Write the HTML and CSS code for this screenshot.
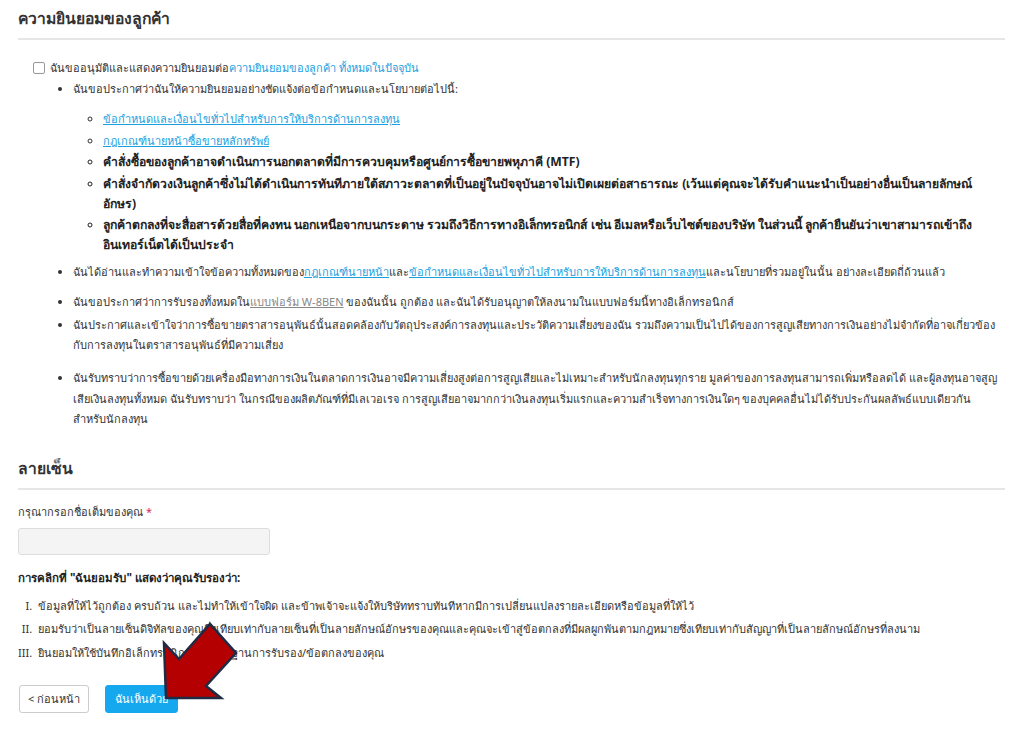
FILE: index.html
```html
<!DOCTYPE html>
<html lang="th">
<head>
<meta charset="utf-8">
<link rel="stylesheet" href="styles.css">
</head>
<body>
<div class="page">
  <h2 class="section-title">ความยินยอมของลูกค้า</h2>
  <div class="consent">
    <label class="check-row"><span class="checkbox"></span><span>ฉันขออนุมัติและแสดงความยินยอมต่อ<a class="link-plain">ความยินยอมของลูกค้า ทั้งหมดในปัจจุบัน</a></span></label>
    <ul class="main-list">
      <li class="item-first">ฉันขอประกาศว่าฉันให้ความยินยอมอย่างชัดแจ้งต่อข้อกำหนดและนโยบายต่อไปนี้:
        <ul class="sub-list">
          <li><a class="link">ข้อกำหนดและเงื่อนไขทั่วไปสำหรับการให้บริการด้านการลงทุน</a></li>
          <li><a class="link">กฎเกณฑ์นายหน้าซื้อขายหลักทรัพย์</a></li>
          <li class="strong">คำสั่งซื้อของลูกค้าอาจดำเนินการนอกตลาดที่มีการควบคุมหรือศูนย์การซื้อขายพหุภาคี (MTF)</li>
          <li class="strong">คำสั่งจำกัดวงเงินลูกค้าซึ่งไม่ได้ดำเนินการทันทีภายใต้สภาวะตลาดที่เป็นอยู่ในปัจจุบันอาจไม่เปิดเผยต่อสาธารณะ (เว้นแต่คุณจะได้รับคำแนะนำเป็นอย่างอื่นเป็นลายลักษณ์อักษร)</li>
          <li class="strong">ลูกค้าตกลงที่จะสื่อสารด้วยสื่อที่คงทน นอกเหนือจากบนกระดาษ รวมถึงวิธีการทางอิเล็กทรอนิกส์ เช่น อีเมลหรือเว็บไซต์ของบริษัท ในส่วนนี้ ลูกค้ายืนยันว่าเขาสามารถเข้าถึงอินเทอร์เน็ตได้เป็นประจำ</li>
        </ul>
      </li>
      <li class="item-read">ฉันได้อ่านและทำความเข้าใจข้อความทั้งหมดของ<a class="link">กฎเกณฑ์นายหน้า</a>และ<a class="link">ข้อกำหนดและเงื่อนไขทั่วไปสำหรับการให้บริการด้านการลงทุน</a>และนโยบายที่รวมอยู่ในนั้น อย่างละเอียดถี่ถ้วนแล้ว</li>
      <li class="item-w8">ฉันขอประกาศว่าการรับรองทั้งหมดใน<a class="link-gray">แบบฟอร์ม W-8BEN</a> ของฉันนั้น ถูกต้อง และฉันได้รับอนุญาตให้ลงนามในแบบฟอร์มนี้ทางอิเล็กทรอนิกส์</li>
      <li class="item-deriv">ฉันประกาศและเข้าใจว่าการซื้อขายตราสารอนุพันธ์นั้นสอดคล้องกับวัตถุประสงค์การลงทุนและประวัติความเสี่ยงของฉัน รวมถึงความเป็นไปได้ของการสูญเสียทางการเงินอย่างไม่จำกัดที่อาจเกี่ยวข้องกับการลงทุนในตราสารอนุพันธ์ที่มีความเสี่ยง</li>
      <li class="item-risk">ฉันรับทราบว่าการซื้อขายด้วยเครื่องมือทางการเงินในตลาดการเงินอาจมีความเสี่ยงสูงต่อการสูญเสียและไม่เหมาะสำหรับนักลงทุนทุกราย มูลค่าของการลงทุนสามารถเพิ่มหรือลดได้ และผู้ลงทุนอาจสูญเสียเงินลงทุนทั้งหมด ฉันรับทราบว่า ในกรณีของผลิตภัณฑ์ที่มีเลเวอเรจ การสูญเสียอาจมากกว่าเงินลงทุนเริ่มแรกและความสำเร็จทางการเงินใดๆ ของบุคคลอื่นไม่ได้รับประกันผลลัพธ์แบบเดียวกัน<br>สำหรับนักลงทุน</li>
    </ul>
  </div>

  <h2 class="section-title sig-title">ลายเซ็น</h2>
  <div class="field">
    <div class="field-label">กรุณากรอกชื่อเต็มของคุณ <span class="req">*</span></div>
    <div class="input"></div>
  </div>
  <div class="certify-title">การคลิกที่ "ฉันยอมรับ" แสดงว่าคุณรับรองว่า:</div>
  <ol class="roman-list">
    <li>ข้อมูลที่ให้ไว้ถูกต้อง ครบถ้วน และไม่ทำให้เข้าใจผิด และข้าพเจ้าจะแจ้งให้บริษัททราบทันทีหากมีการเปลี่ยนแปลงรายละเอียดหรือข้อมูลที่ให้ไว้</li>
    <li>ยอมรับว่าเป็นลายเซ็นดิจิทัลของคุณซึ่งเทียบเท่ากับลายเซ็นที่เป็นลายลักษณ์อักษรของคุณและคุณจะเข้าสู่ข้อตกลงที่มีผลผูกพันตามกฎหมายซึ่งเทียบเท่ากับสัญญาที่เป็นลายลักษณ์อักษรที่ลงนาม</li>
    <li>ยินยอมให้ใช้บันทึกอิเล็กทรอนิกส์เป็นหลักฐานการรับรอง/ข้อตกลงของคุณ</li>
  </ol>
  <div class="actions">
    <button class="btn btn-back">&lt; ก่อนหน้า</button>
    <button class="btn btn-primary">ฉันเห็นด้วย</button>
  </div>
</div>
<svg class="arrow" width="90" height="100" viewBox="0 0 90 100">
  <polygon points="8,94 6,39 21,55 52,20 78,49 48,82 63,94" fill="#b40000" stroke="#1f2a44" stroke-width="2.5" stroke-linejoin="miter"/>
</svg>
</body>
</html>
```

FILE: styles.css
```css
html, body {
  margin: 0;
  padding: 0;
  background: #ffffff;
}
body {
  font-family: Tahoma, "Noto Sans", "DejaVu Sans", sans-serif;
  font-size: 11px;
  color: #333333;
  position: relative;
  width: 1024px;
  height: 738px;
  overflow: hidden;
}
.page {
  padding: 0 19px 0 18px;
}
.section-title {
  margin: 0;
  padding-top: 8px;
  padding-bottom: 10px;
  font-size: 15.7px;
  font-weight: bold;
  color: #333;
  line-height: 20px;
  border-bottom: 2px solid #e6e6e6;
}
.consent {
  padding: 20px 0 0 15px;
}
.check-row {
  display: flex;
  align-items: center;
  gap: 5px;
  line-height: 16px;
}
.checkbox {
  width: 10px;
  height: 10px;
  border: 1px solid #999;
  border-radius: 2px;
  background: #fff;
  flex: none;
}
.link-plain { color: #1a9fe0; }
.link { color: #1a9fe0; text-decoration: underline; }
.link-gray { color: #888; text-decoration: underline; }
.main-list {
  margin: 2px 0 0 0;
  padding-left: 40px;
  list-style: disc;
}
.main-list > li {
  line-height: 20.5px;
}
.main-list > li.item-first { line-height: 21px; }
.sub-list {
  margin: 10px 0 0 0;
  padding-left: 30px;
  list-style: circle;
}
.sub-list li { line-height: 20px; }
.sub-list li + li { margin-top: 1.5px; }
.sub-list li.strong { font-weight: bold; color: #222; font-size: 12.2px; }
.item-read { margin-top: 6.5px; }
.item-w8 { margin-top: 9.5px; }
.item-deriv { margin-top: 2.5px; }
.item-risk { margin-top: 12.5px; }
.sig-title {
  margin-top: 20px;
}
.field { padding-top: 14px; }
.field-label { line-height: 16px; }
.req { color: #e0245e; }
.input {
  margin-top: 8px;
  width: 250px;
  height: 25px;
  background: #f4f4f4;
  border: 1px solid #dddddd;
  border-radius: 3px;
}
.certify-title {
  margin-top: 15px;
  font-weight: bold;
  font-size: 11.5px;
  color: #222;
  line-height: 16px;
}
.roman-list {
  margin: 8px 0 0 0;
  padding-left: 17px;
  list-style: upper-roman;
}
.roman-list li {
  line-height: 23.5px;
  padding-left: 3px;
}
.actions {
  display: flex;
  gap: 16px;
  margin-top: 21px;
  padding-left: 1px;
}
.btn {
  font-family: inherit;
  font-size: 11px;
  height: 28px;
  border-radius: 3px;
  padding: 0;
  white-space: nowrap;
  cursor: pointer;
}
.btn-back {
  background: #fff;
  border: 1px solid #cccccc;
  color: #333;
  width: 70px;
}
.btn-primary {
  background: #16a8ee;
  border: 1px solid #16a8ee;
  color: #fff;
  width: 73px;
}
.arrow {
  position: absolute;
  left: 158px;
  top: 604px;
}
```
